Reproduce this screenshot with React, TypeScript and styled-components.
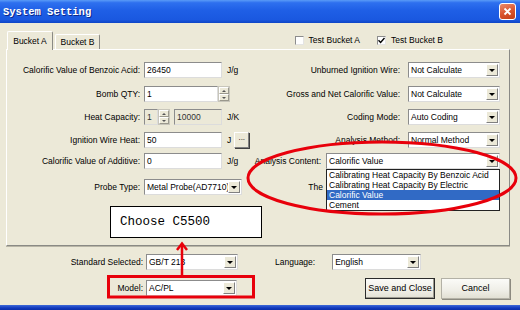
import styled, { createGlobalStyle } from 'styled-components';

const GlobalStyle = createGlobalStyle`
  body {
    margin: 0;
    background: #ece9d8;
    font-family: 'Liberation Sans', Arial, sans-serif;
    font-size: 8.5px;
    color: #000;
  }
`;

const Window = styled.div`
  position: relative;
  width: 520px;
  height: 310px;
  overflow: hidden;
  display: flex;
  flex-direction: column;
  background: #ece9d8;
`;

const TitleBar = styled.div`
  height: 23px;
  flex-shrink: 0;
  display: flex;
  align-items: center;
  justify-content: space-between;
  padding: 0 4px 0 3px;
  background: linear-gradient(
    180deg,
    #5a9bf7 0%,
    #2e70ef 12%,
    #1f5fe6 45%,
    #1a58e0 85%,
    #0d45c6 100%
  );
`;

const Title = styled.span`
  font-family: 'Liberation Mono', 'Courier New', monospace;
  font-weight: bold;
  font-size: 10.5px;
  color: #fff;
  text-shadow: 1px 1px 0 #0c2a8c;
`;

const CloseButton = styled.div`
  width: 15px;
  height: 15px;
  border: 1px solid #fff;
  border-radius: 3px;
  background: linear-gradient(160deg, #eb8b6c 0%, #d9532c 55%, #c23e17 100%);
  display: flex;
  align-items: center;
  justify-content: center;
`;

const Body = styled.div`
  flex: 1;
  padding: 8px 10px 0 6px;
  display: flex;
  flex-direction: column;
`;

const BottomEdge = styled.div`
  height: 5px;
  flex-shrink: 0;
  background: linear-gradient(180deg, #3f6ad8 0%, #1038bd 60%, #0a2ea8 100%);
`;

const TopRow = styled.div`
  height: 18px;
  display: flex;
  align-items: flex-end;
  padding-left: 1px;
`;

const Tab = styled.div<{ $active?: boolean }>`
  position: relative;
  z-index: 1;
  box-sizing: border-box;
  height: ${({ $active }) => ($active ? '19px' : '15px')};
  margin-bottom: ${({ $active }) => ($active ? '-1px' : '0')};
  margin-right: ${({ $active }) => ($active ? '2px' : '0')};
  width: ${({ $active }) => ($active ? '46px' : '45px')};
  display: flex;
  align-items: center;
  justify-content: center;
  white-space: nowrap;
  background: #ece9d8;
  border: 1px solid;
  border-bottom: none;
  border-color: #fff #8a8a85 #8a8a85 #fff;
  border-radius: 2px 2px 0 0;
`;

const Checks = styled.div`
  margin-left: auto;
  padding-right: 67px;
  align-self: center;
  display: flex;
  align-items: center;
  gap: 17px;
`;

const CheckLabel = styled.div`
  display: flex;
  align-items: center;
  gap: 5px;
`;

const Box = styled.div`
  width: 9px;
  height: 9px;
  box-sizing: border-box;
  background: #fff;
  border: 1px solid;
  border-color: #8c8c8c #e4e4e4 #e4e4e4 #8c8c8c;
  display: flex;
  align-items: center;
  justify-content: center;
`;

const Panel = styled.div`
  height: 197px;
  box-sizing: border-box;
  border: 1px solid;
  border-color: #fff #8a8a85 #8a8a85 #fff;
  box-shadow: 0 1px 0 #b8b5a6;
  display: grid;
  grid-template-columns: 133px 106px 1fr;
  grid-template-rows: 24px 23px 23px 21px 26px 16px;
  column-gap: 4px;
  padding: 12px 9px 0 0;
`;

const Label = styled.div`
  height: 16px;
  line-height: 16px;
  text-align: right;
  white-space: nowrap;
`;

const FieldRow = styled.div`
  display: flex;
  align-items: center;
  height: 16px;
`;

const Unit = styled.span<{ $gap?: number }>`
  margin-left: ${({ $gap }) => $gap ?? 5}px;
`;

const Field = styled.div<{ $w: number; $disabled?: boolean }>`
  width: ${({ $w }) => $w}px;
  height: 16px;
  box-sizing: border-box;
  border: 1px solid;
  border-color: #8c8c8c #dcdcdc #dcdcdc #8c8c8c;
  background: ${({ $disabled }) => ($disabled ? '#ece9d8' : '#fff')};
  padding-left: 2px;
  line-height: 14px;
  white-space: nowrap;
  overflow: hidden;
  color: ${({ $disabled }) => ($disabled ? '#333' : '#000')};
`;

const Spinner = styled.div<{ $gap?: number }>`
  width: 12px;
  height: 16px;
  margin-right: ${({ $gap }) => $gap ?? 0}px;
  box-sizing: border-box;
  display: flex;
  flex-direction: column;
  border: 1px solid #c8c6bb;
  background: #fff;
`;

const SpinHalf = styled.div<{ $down?: boolean }>`
  flex: 1;
  background: #ece9d8;
  border: 1px solid;
  border-color: #fff #9a988d #9a988d #fff;
  display: flex;
  align-items: center;
  justify-content: center;
  &::after {
    content: '';
    border-left: 2px solid transparent;
    border-right: 2px solid transparent;
    ${({ $down }) =>
      $down ? 'border-top: 2px solid #555;' : 'border-bottom: 2px solid #555;'}
  }
`;

const SmallButton = styled.div`
  width: 15px;
  height: 16px;
  margin-left: 3px;
  box-sizing: border-box;
  background: #ece9d8;
  border: 1px solid;
  border-color: #fff #808080 #808080 #fff;
  box-shadow: 1px 1px 0 #404040;
  text-align: center;
  line-height: 10px;
  font-size: 8px;
`;

const Select = styled.div<{ $w: number }>`
  position: relative;
  width: ${({ $w }) => $w}px;
  height: 16px;
  box-sizing: border-box;
  border: 1px solid;
  border-color: #8c8c8c #dcdcdc #dcdcdc #8c8c8c;
  background: #fff;
  display: flex;
  align-items: center;
  padding: 1px;
`;

const SelectValue = styled.div`
  flex: 1;
  padding-left: 1px;
  white-space: nowrap;
  overflow: hidden;
`;

const ArrowButton = styled.div`
  width: 12px;
  height: 12px;
  flex-shrink: 0;
  box-sizing: border-box;
  background: #ece9d8;
  border: 1px solid;
  border-color: #fff #808080 #808080 #fff;
  display: flex;
  align-items: center;
  justify-content: center;
  &::after {
    content: '';
    border-left: 3px solid transparent;
    border-right: 3px solid transparent;
    border-top: 3px solid #000;
  }
`;

const RightRow = styled.div<{ $gap?: number }>`
  display: flex;
  justify-content: flex-end;
  align-items: center;
  gap: ${({ $gap }) => $gap ?? 8}px;
  height: 16px;
`;

const List = styled.div`
  position: absolute;
  z-index: 2;
  top: 100%;
  left: -1px;
  right: -1px;
  margin-top: 1px;
  background: #fff;
  border: 1px solid #222;
`;

const ListItem = styled.div<{ $selected?: boolean }>`
  height: 10px;
  line-height: 10px;
  padding-left: 2px;
  white-space: nowrap;
  background: ${({ $selected }) => ($selected ? '#316ac5' : '#fff')};
  color: ${({ $selected }) => ($selected ? '#fff' : '#000')};
`;

const Footer = styled.div`
  display: grid;
  grid-template-columns: 137px 92px 1fr;
  grid-template-rows: 16px 20px;
  column-gap: 3px;
  row-gap: 8px;
  padding-top: 8px;
  align-items: center;
`;

const LanguageCell = styled.div`
  display: flex;
  align-items: center;
  padding-left: 34px;
  gap: 17px;
`;

const Buttons = styled.div`
  display: flex;
  justify-content: flex-end;
  gap: 6px;
`;

const Button = styled.div<{ $default?: boolean }>`
  width: ${({ $default }) => ($default ? '70px' : '69px')};
  height: 21px;
  box-sizing: border-box;
  display: flex;
  align-items: center;
  justify-content: center;
  background: linear-gradient(180deg, #fbfbf8 0%, #efeee7 60%, #e2e0d4 100%);
  border: 1px solid ${({ $default }) => ($default ? '#2b2b2b' : '#b3b1a6')};
  box-shadow: ${({ $default }) =>
    $default ? 'inset -1px -1px 0 #9c9a90' : '1px 1px 0 #8c8a80'};
  font-size: 9px;
`;

const Annotations = styled.div`
  position: absolute;
  inset: 0;
  pointer-events: none;
  z-index: 5;
`;

const Callout = styled.div`
  position: absolute;
  left: 110px;
  top: 206px;
  width: 152px;
  height: 32px;
  box-sizing: border-box;
  border: 1.5px solid #000;
  background: #fff;
  padding-left: 9px;
  display: flex;
  align-items: center;
  font-family: 'Liberation Mono', 'Courier New', monospace;
  font-size: 12.5px;
`;

const contentOptions = [
  'Calibrating Heat Capacity By Benzoic Acid',
  'Calibrating Heat Capacity By Electric',
  'Calorific Value',
  'Cement',
];

const Dropdown = ({ w, value }: { w: number; value: string }) => (
  <Select $w={w}>
    <SelectValue>{value}</SelectValue>
    <ArrowButton />
  </Select>
);

export default function App() {
  return (
    <Window>
      <GlobalStyle />
      <TitleBar>
        <Title>System Setting</Title>
        <CloseButton>
          <svg width='9' height='9' viewBox='0 0 9 9'>
            <path d='M1.5 1.5 L7.5 7.5 M7.5 1.5 L1.5 7.5' stroke='#fff' strokeWidth='1.8' />
          </svg>
        </CloseButton>
      </TitleBar>

      <Body>
        <TopRow>
          <Tab $active>Bucket A</Tab>
          <Tab>Bucket B</Tab>
          <Checks>
            <CheckLabel>
              <Box />
              Test Bucket A
            </CheckLabel>
            <CheckLabel>
              <Box>
                <svg width='7' height='7' viewBox='0 0 7 7'>
                  <path d='M0.5 3.2 L2.6 5.4 L6.5 1' stroke='#000' strokeWidth='1.4' fill='none' />
                </svg>
              </Box>
              Test Bucket B
            </CheckLabel>
          </Checks>
        </TopRow>

        <Panel>
          <Label>Calorific Value of Benzoic Acid:</Label>
          <FieldRow>
            <Field $w={78}>26450</Field>
            <Unit>J/g</Unit>
          </FieldRow>
          <RightRow>
            <Label>Unburned Ignition Wire:</Label>
            <Dropdown w={92} value='Not Calculate' />
          </RightRow>

          <Label>Bomb QTY:</Label>
          <FieldRow>
            <Field $w={74}>1</Field>
            <Spinner>
              <SpinHalf />
              <SpinHalf $down />
            </Spinner>
          </FieldRow>
          <RightRow>
            <Label>Gross and Net Calorific Value:</Label>
            <Dropdown w={92} value='Not Calculate' />
          </RightRow>

          <Label>Heat Capacity:</Label>
          <FieldRow>
            <Field $w={14} $disabled>1</Field>
            <Spinner $gap={4}>
              <SpinHalf />
              <SpinHalf $down />
            </Spinner>
            <Field $w={48} $disabled>10000</Field>
            <Unit>J/K</Unit>
          </FieldRow>
          <RightRow>
            <Label>Coding Mode:</Label>
            <Dropdown w={92} value='Auto Coding' />
          </RightRow>

          <Label>Ignition Wire Heat:</Label>
          <FieldRow>
            <Field $w={78}>50</Field>
            <Unit>J</Unit>
            <SmallButton>...</SmallButton>
          </FieldRow>
          <RightRow>
            <Label>Analysis Method:</Label>
            <Dropdown w={92} value='Normal Method' />
          </RightRow>

          <Label>Calorific Value of Additive:</Label>
          <FieldRow>
            <Field $w={78}>0</Field>
            <Unit>J/g</Unit>
          </FieldRow>
          <RightRow $gap={5}>
            <Label>Analysis Content:</Label>
            <Select $w={174}>
              <SelectValue>Calorific Value</SelectValue>
              <ArrowButton />
              <List>
                {contentOptions.map((o) => (
                  <ListItem key={o} $selected={o === 'Calorific Value'}>
                    {o}
                  </ListItem>
                ))}
              </List>
            </Select>
          </RightRow>

          <Label>Probe Type:</Label>
          <FieldRow>
            <Dropdown w={98} value='Metal Probe(AD7710)' />
          </FieldRow>
          <RightRow $gap={3}>
            <Label>The</Label>
            <Select $w={174} />
          </RightRow>
        </Panel>

        <Footer>
          <Label>Standard Selected:</Label>
          <Dropdown w={92} value='GB/T 213' />
          <LanguageCell>
            <span>Language:</span>
            <Dropdown w={89} value='English' />
          </LanguageCell>

          <Label>Model:</Label>
          <Dropdown w={91} value='AC/PL' />
          <Buttons>
            <Button $default>Save and Close</Button>
            <Button>Cancel</Button>
          </Buttons>
        </Footer>
      </Body>

      <BottomEdge />

      <Annotations>
        <svg width='520' height='310' style={{ position: 'absolute', left: 0, top: 0 }}>
          <ellipse cx='382' cy='178' rx='134' ry='36' fill='none' stroke='#e8000b' strokeWidth='3' />
          <rect x='108.5' y='276.5' width='145' height='20.5' fill='none' stroke='#e8000b' strokeWidth='3' />
          <path d='M182 276 L182 244' stroke='#e8000b' strokeWidth='2.5' />
          <path d='M177 250 L182 243.5 L187 250' stroke='#e8000b' strokeWidth='2.5' fill='none' />
        </svg>
        <Callout>Choose C5500</Callout>
      </Annotations>
    </Window>
  );
}
